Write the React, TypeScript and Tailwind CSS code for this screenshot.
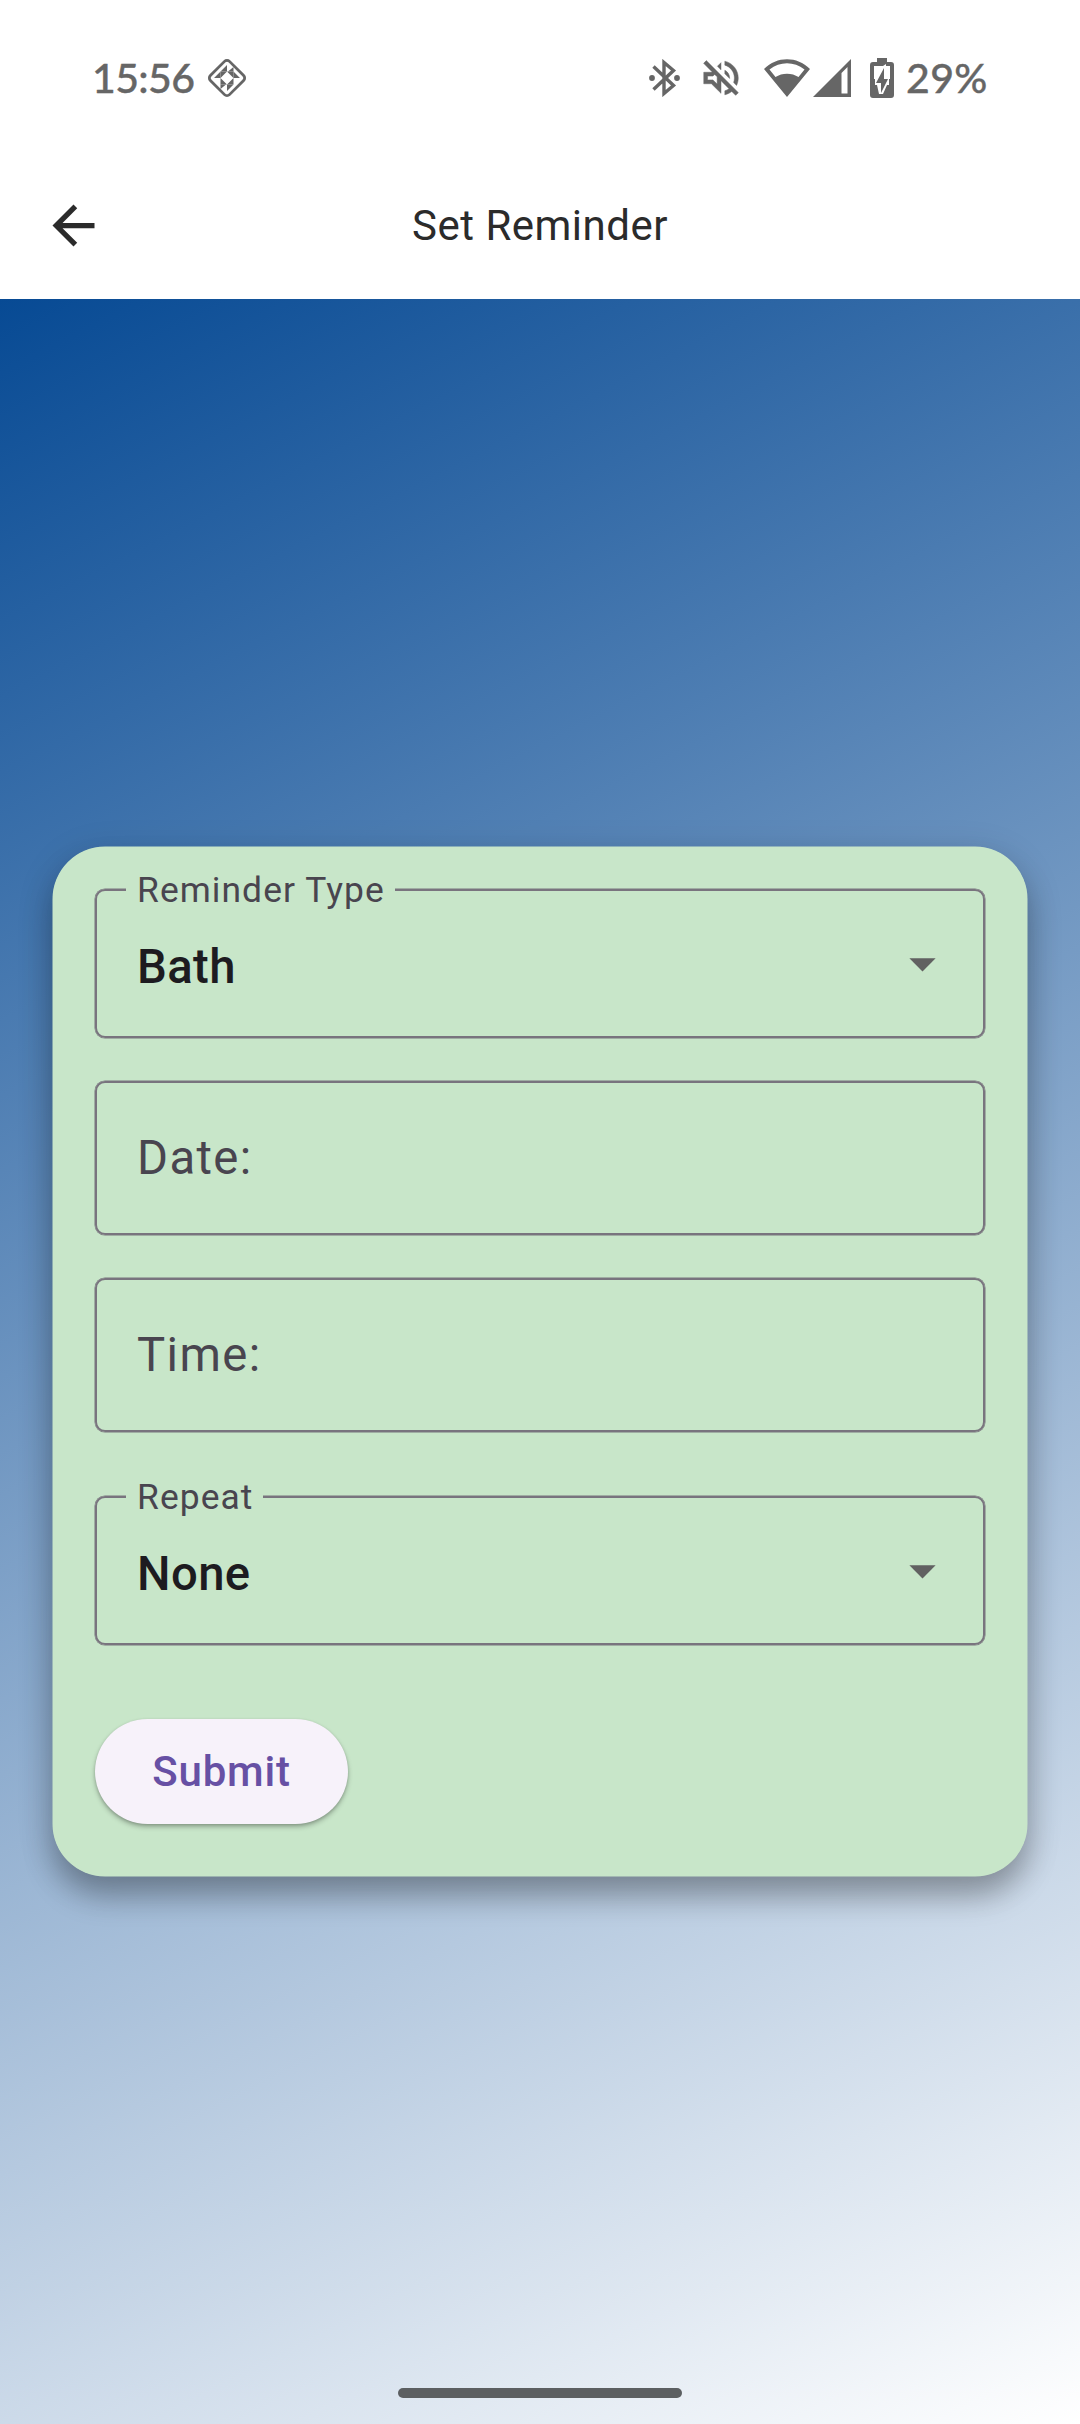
import React from "react";

function DropField({ label, value, className = "" }: { label: string; value: string; className?: string }) {
  return (
    <div className={`relative flex h-[149px] items-center justify-between rounded-[10px] border-2 border-[#79747e] pl-[40px] pr-[29px] shadow-[0_0_0_0.5px_#79747e] ${className}`}>
      <span className="absolute -top-[22px] left-[29px] bg-[#c8e6c9] pl-[11px] pr-[10px] text-[35.4px] leading-[42px] tracking-[1.07px] text-[#49454f]">
        {label}
      </span>
      <span className="mt-[6px] text-[47.25px] font-medium leading-[56px] tracking-[0.4px] text-[#1d1b20]">{value}</span>
      <svg viewBox="0 0 24 24" className="h-[63px] w-[63px] fill-[#616161]">
        <path d="M7 10l5 5 5-5z" />
      </svg>
    </div>
  );
}

function TextField({ label, className = "" }: { label: string; className?: string }) {
  return (
    <div className={`flex h-[154px] items-center rounded-[10px] border-2 border-[#79747e] pl-[40px] shadow-[0_0_0_0.5px_#79747e] ${className}`}>
      <span className="text-[47.25px] leading-[56px] tracking-[1.4px] text-[#49454f]">{label}</span>
    </div>
  );
}

function StatusBar() {
  return (
    <div className="flex h-[155px] items-center justify-between pl-[92px] pr-[92px] text-[#666666]">
      <div className="flex items-center">
        <span className="w-[103px] font-[Lato] text-[41px] font-medium leading-[46px] tracking-[-0.6px] [-webkit-text-stroke:0.4px_#666666]">15:56</span>
        <svg viewBox="0 0 40 40" className="ml-[12px] h-[40px] w-[40px]" fill="currentColor">
          <rect x="6.500" y="6.500" width="27" height="27" rx="3.500" transform="rotate(45 20 20)" fill="none" stroke="currentColor" strokeWidth="2.8" />
          <path d="M20 7v6.500h-6.500zM26.500 9v4.500H21zM33 20h-6.500v-6.500zM20 33v-6.500h6.500zM13.500 31v-4.500H19zM7 20h6.500v-6.500z" />
          <path d="M13.500 13.500h6.500l-6.500 6.500zM26.500 13.500v6.500l-6.500-6.500zM26.500 26.500h-6.500l6.500-6.500zM13.500 26.500v-6.500l6.500 6.500z" />
        </svg>
      </div>
      <div className="flex items-center">
        <svg viewBox="0 0 32 38" className="h-[38px] w-[32px]" fill="none" stroke="currentColor" strokeWidth="3.400">
          <path d="M4.500 7.500l20 19-9.500 8V3.500l9.500 8-20 19" />
          <circle cx="3" cy="19" r="2.900" fill="currentColor" stroke="none" />
          <circle cx="28" cy="19" r="2.900" fill="currentColor" stroke="none" />
        </svg>
        <svg viewBox="0 0 24 24" className="ml-[17px] h-[46px] w-[46px]" fill="currentColor" stroke="currentColor" strokeWidth="0.250">
          <path d="M4.340 2.930L2.930 4.340 7.290 8.700 7 9H3v6h4l5 5v-6.590l4.180 4.180c-.65.49-1.380.88-2.180 1.110v2.060c1.340-.3 2.570-.92 3.610-1.750l2.050 2.050 1.410-1.410L4.340 2.930zM10 15.170L7.830 13H5v-2h2.830l.88-.88L10 11.410v3.760zM19 12c0 .82-.15 1.610-.41 2.340l1.530 1.530c.56-1.170.88-2.480.88-3.870 0-4.280-2.990-7.860-7-8.770v2.060c2.890.86 5 3.540 5 6.710zm-7-8l-1.880 1.880L12 7.760V4zm4.500 8c0-1.770-1.020-3.290-2.500-4.030v1.790l2.480 2.480c.01-.08.020-.16.020-.24z" />
        </svg>
        <svg viewBox="0 0 46 38" className="ml-[20px] h-[38px] w-[46px]" fill="currentColor">
          <path fillRule="evenodd" d="M0 10C13-3 33-3 46 10L23 38zM5.500 10.500L11.500 18C18 13.500 28 13.500 34.500 18l6-7.500C30 2 16 2 5.500 10.500z" />
        </svg>
        <svg viewBox="0 0 38 38" className="ml-[3px] h-[38px] w-[38px]" fill="currentColor">
          <path fillRule="evenodd" d="M38 0v38H0zM28.500 14v20.500h6V8z" />
        </svg>
        <svg viewBox="0 0 24 40" className="ml-[19px] h-[40px] w-[24px]" fill="currentColor">
          <path fillRule="evenodd" d="M7 0h10v4h4q3 0 3 3v30q0 3-3 3H3q-3 0-3-3V7q0-3 3-3h4zM4 8v13h1v6h2l2 9h4l4-9h2v-6h1V8h-4V6l-3 2z" />
          <path d="M14 10v11h4l-7 14V25H6z" />
        </svg>
        <span className="ml-[12px] w-[82px] font-[Lato] text-[41px] font-medium leading-[46px] tracking-[0.4px] [-webkit-text-stroke:0.4px_#666666]">29%</span>
      </div>
    </div>
  );
}

export default function App() {
  return (
    <div className="flex h-[2424px] w-[1080px] flex-col overflow-hidden bg-white font-[Roboto,sans-serif]">
      <StatusBar />
      <header className="grid h-[144px] grid-cols-[1fr_auto_1fr] items-center px-[42px] pb-[3px]">
        <svg viewBox="0 0 24 24" className="h-[63px] w-[63px] fill-[#2b2b2b]">
          <path d="M20 11H7.830l5.590-5.590L12 4l-8 8 8 8 1.410-1.410L7.830 13H20v-2z" />
        </svg>
        <h1 className="text-[42px] leading-[50px] tracking-[0.5px] text-[#2b2b2b]">Set Reminder</h1>
      </header>
      <main className="flex flex-1 flex-col items-center bg-[linear-gradient(153.06deg,#074a94,#ffffff)] pt-[548px]">
        <section className="flex h-[1029px] w-[974px] flex-col rounded-[52px] bg-[#c8e6c9] px-[42px] pt-[42px] shadow-[0_0_0_0.5px_#c8e6c9,0_20px_30px_rgba(0,0,0,0.27),0_8px_38px_rgba(0,0,0,0.13)]">
          <DropField label="Reminder Type" value="Bath" />
          <TextField label="Date:" className="mt-[43px]" />
          <TextField label="Time:" className="mt-[43px]" />
          <DropField label="Repeat" value="None" className="mt-[64px]" />
          <button className="mt-[74px] h-[105px] w-[253px] rounded-full bg-[#f7f2fa] text-[42px] font-medium leading-[50px] tracking-[0.8px] text-[#6750a4] shadow-[0_3px_5px_rgba(0,0,0,0.26),0_1px_3px_rgba(0,0,0,0.14)]">
            Submit
          </button>
        </section>
        <div className="mt-auto mb-[26px] h-[10px] w-[284px] rounded-full bg-[#5c5f61]" />
      </main>
    </div>
  );
}
